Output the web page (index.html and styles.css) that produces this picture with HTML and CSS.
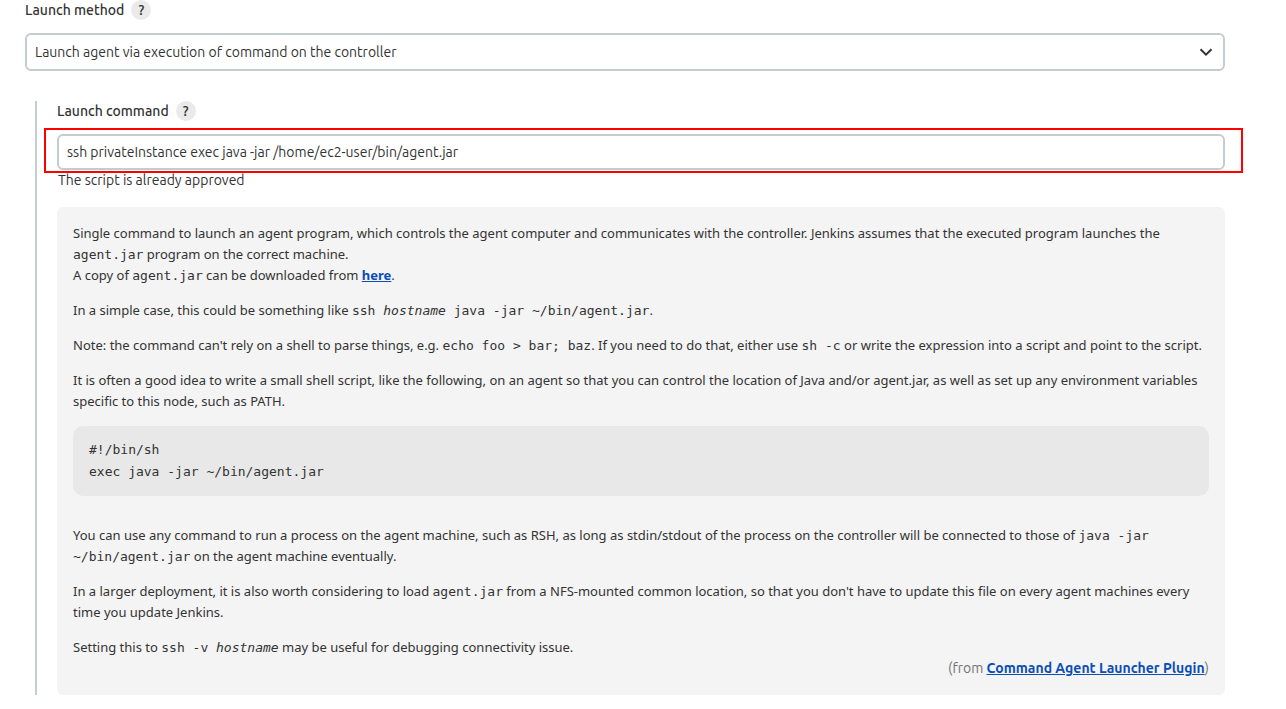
FILE: index.html
```html
<!DOCTYPE html>
<html lang="en">
<head>
<meta charset="utf-8">
<title>Configure node</title>
<link rel="stylesheet" href="styles.css">
</head>
<body>
<form class="config">
  <div class="label-row">
    <label class="label" for="method">Launch method</label>
    <button class="help" type="button" aria-label="Help for launch method">?</button>
  </div>
  <div class="select">
    <select class="select-input" id="method">
      <option>Launch agent via execution of command on the controller</option>
    </select>
    <svg class="chevron" viewBox="0 0 14 8" aria-hidden="true"><path d="M1.5 1.2 7 6.6 12.5 1.2"/></svg>
  </div>

  <section class="nested">
    <div class="label-row">
      <label class="label" for="command">Launch command</label>
      <button class="help" type="button" aria-label="Help for launch command">?</button>
    </div>
    <div class="field">
      <input class="text-input" id="command" type="text" value="ssh privateInstance exec java -jar /home/ec2-user/bin/agent.jar">
      <span class="highlight"></span>
    </div>
    <div class="status">The script is already approved</div>

    <div class="help-panel">
      <p>Single command to launch an agent program, which controls the agent computer and communicates with the controller. Jenkins assumes that the executed program launches the <code>agent.jar</code> program on the correct machine.<br>
      A copy of <code>agent.jar</code> can be downloaded from <a href="#agent">here</a>.</p>
      <p>In a simple case, this could be something like <code>ssh <i>hostname</i> java -jar ~/bin/agent.jar</code>.</p>
      <p>Note: the command can't rely on a shell to parse things, e.g. <code>echo foo &gt; bar; baz</code>. If you need to do that, either use <code>sh -c</code> or write the expression into a script and point to the script.</p>
      <p>It is often a good idea to write a small shell script, like the following, on an agent so that you can control the location of Java and/or agent.jar, as well as set up any environment variables specific to this node, such as PATH.</p>
<pre>#!/bin/sh
exec java -jar ~/bin/agent.jar</pre>
      <p>You can use any command to run a process on the agent machine, such as RSH, as long as stdin/stdout of the process on the controller will be connected to those of <code>java -jar ~/bin/agent.jar</code> on the agent machine eventually.</p>
      <p>In a larger deployment, it is also worth considering to load <code>agent.jar</code> from a NFS-mounted common location, so that you don't have to update this file on every agent machines every time you update Jenkins.</p>
      <p>Setting this to <code>ssh -v <i>hostname</i></code> may be useful for debugging connectivity issue.</p>
      <div class="source">(from <a href="#plugin">Command Agent Launcher Plugin</a>)</div>
    </div>
  </section>
</form>
</body>
</html>
```
FILE: styles.css
```css
* { box-sizing: border-box; }

body {
  margin: 0;
  background: #fff;
  color: #333;
  font: 14px/21px Ubuntu, Roboto, sans-serif;
}

.config { padding: 0 61px 14px 25px; }

.label-row {
  display: flex;
  align-items: center;
  gap: 7px;
  height: 20px;
}

.label { font-weight: 500; }

.help {
  width: 20px;
  height: 20px;
  padding: 0;
  border: 0;
  border-radius: 50%;
  background: #eaeaea;
  color: #333;
  font: 500 14px/20px Ubuntu, Roboto, sans-serif;
}

.select {
  position: relative;
  margin-top: 13px;
}

.select-input,
.text-input {
  display: block;
  width: 100%;
  border: 2px solid #c3ccd1;
  border-radius: 6px;
  background: #fff;
  color: #333;
  font: inherit;
  padding: 0 8px;
}

.select-input {
  height: 38px;
  appearance: none;
}

.text-input { height: 36px; }

.chevron {
  position: absolute;
  top: 15px;
  right: 12px;
  width: 14px;
  height: 8px;
  fill: none;
  stroke: #333;
  stroke-width: 2;
  pointer-events: none;
}

.nested {
  margin: 30px 0 0 10px;
  padding-left: 20px;
  border-left: 2px solid #c3ccd1;
}

.field {
  position: relative;
  margin-top: 13px;
}

.highlight {
  position: absolute;
  inset: -6px -18px -3px -13px;
  border: 2px solid #f00;
  pointer-events: none;
}

.status { padding-left: 1px; }

.help-panel {
  margin-top: 16px;
  padding: 16px;
  border-radius: 6px;
  background: #f4f4f4;
}

.help-panel p {
  margin: 0 0 14px;
  font: 13px/21px "Noto Sans", sans-serif;
}

.help-panel p:last-of-type { margin-bottom: 0; }

code,
pre { font: 13px "DejaVu Sans Mono", monospace; }

code { line-height: 1; }

.help-panel pre {
  margin: 0 0 29px;
  padding: 13px 16px;
  border-radius: 10px;
  background: #e8e8e8;
  line-height: 22px;
}

a {
  color: #0b4db5;
  font-weight: 700;
}

.source {
  color: #737373;
  text-align: right;
}
```
